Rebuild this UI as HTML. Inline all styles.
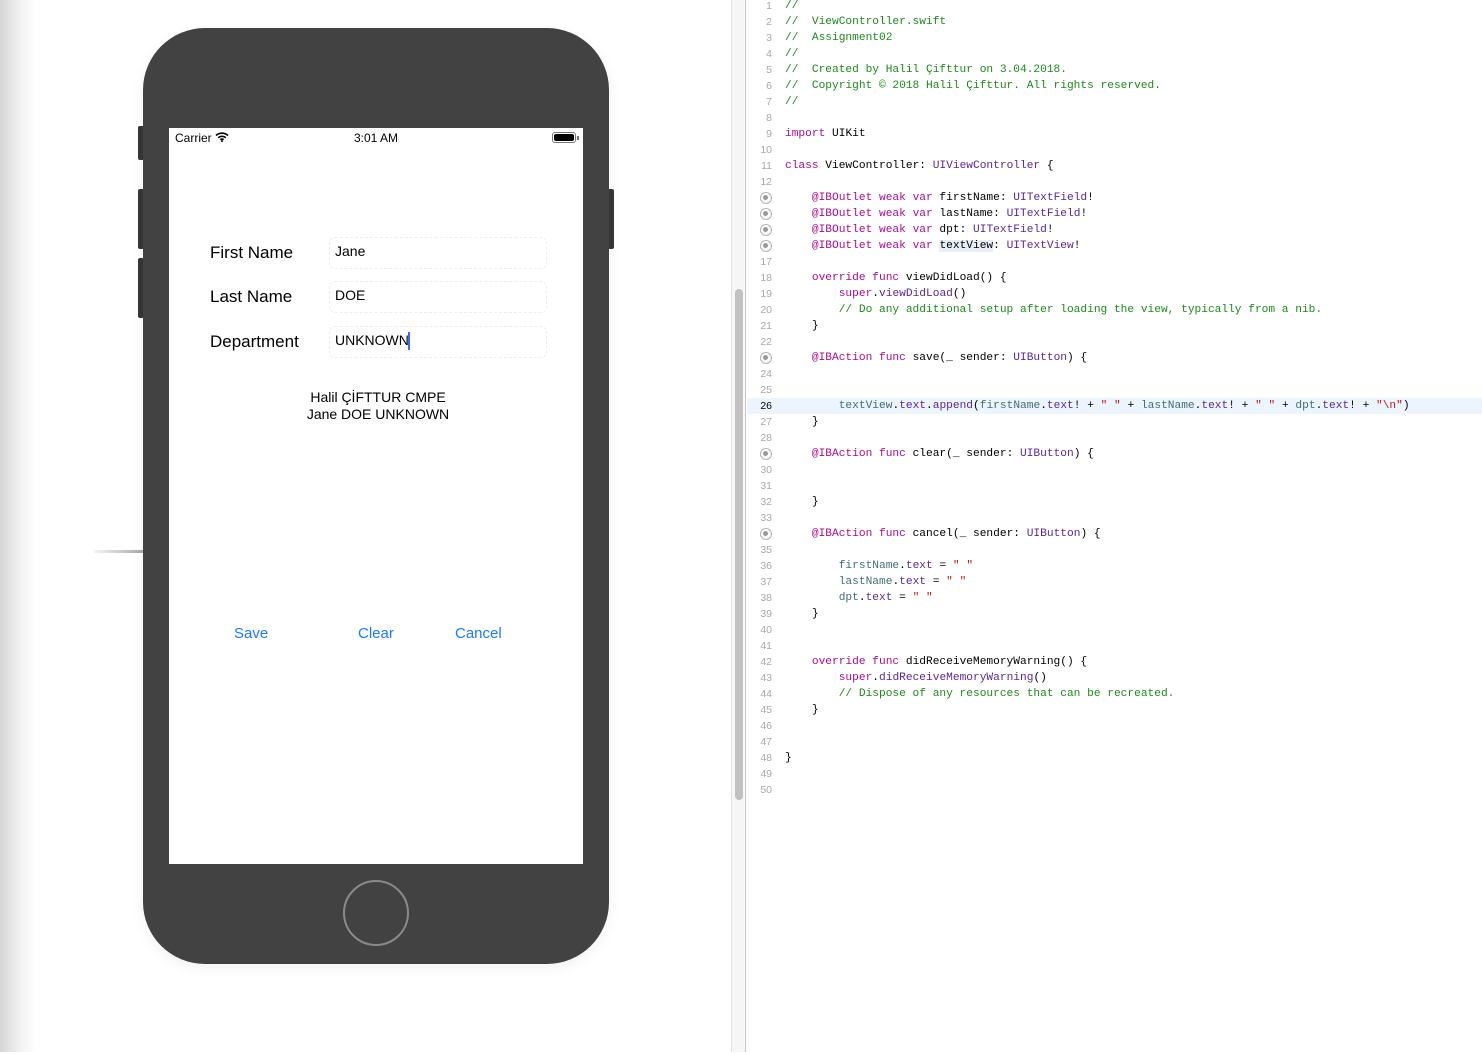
<!DOCTYPE html>
<html><head><meta charset="utf-8"><style>
*{margin:0;padding:0;box-sizing:border-box}
body{width:1482px;height:1052px;position:relative;overflow:hidden;background:#fff;font-family:"Liberation Sans",sans-serif}
.abs{position:absolute}
.grad{left:0;top:0;width:36px;height:1052px;background:linear-gradient(90deg,#d6d6d6,#f3f3f3 60%,#fff)}
.phone{left:143px;top:28px;width:466px;height:936px;background:#424242;border-radius:62px;box-shadow:0 4px 14px rgba(0,0,0,0.06)}
.btn{background:#363636;width:6px;border-radius:2px}
.screen{left:169px;top:128px;width:414px;height:736px;background:#fff}
.home{left:343px;top:880px;width:66px;height:66px;border:2.5px solid #8a8a8a;border-radius:50%}
.lbl{font-size:17px;color:#000}
.fld{font-size:14px;color:#000}
.box{position:absolute;left:160px;width:218px;height:32px;border:1px dashed #eee;border-radius:6px}
.blue{color:#1a7cf6;font-size:15px}
.strip{left:731px;top:0;width:15px;height:1052px;background:#f6f6f6;border-left:1px solid #e2e2e2;border-right:1px solid #c9c9c9}
.scroll{left:735px;top:289px;width:8px;height:511px;background:#c1c1c1;border-radius:4px}
.code{left:747px;top:2px;width:735px;height:1052px;font-family:"Liberation Mono",monospace;font-size:11.2px;color:#000}
.ln{position:absolute;left:0;width:735px;height:16px;line-height:16px;white-space:pre}
.num{position:absolute;left:0;width:25px;text-align:right;color:#a8a8a8;font-size:10.5px;font-family:"Liberation Sans",sans-serif}
.txt{position:absolute;left:38px}
.dot{position:absolute;left:13px;top:2px;width:12px;height:12px;border-radius:50%;border:1.5px solid #b0b0b0;background:#fff}
.dot:after{content:"";position:absolute;left:2px;top:2px;width:5px;height:5px;border-radius:50%;background:#999}
.c{color:#1c8a1c}.k{color:#aa0d91}.t{color:#5c2699}.p{color:#3f6e74}.s{color:#c41a16}
.hl{background:#ecf4fe}
</style></head><body>
<div class="abs grad"></div>
<div class="abs" style="left:94px;top:550px;width:50px;height:3px;background:linear-gradient(90deg,#f4f4f4,#a8a8a8)"></div>
<div class="abs btn" style="left:138px;top:126px;height:34px"></div>
<div class="abs btn" style="left:138px;top:189px;height:60px"></div>
<div class="abs btn" style="left:138px;top:258px;height:60px"></div>
<div class="abs btn" style="left:608px;top:189px;height:60px"></div>
<div class="abs phone"></div>
<div class="abs home"></div>
<div class="abs screen">
 <div class="abs" style="left:6px;top:3px;font-size:12px">Carrier <svg width="14" height="10" viewBox="0 0 14 10" style="vertical-align:0"><path d="M1 3.5a9 9 0 0 1 12 0M3.2 5.7a6 6 0 0 1 7.6 0M5.3 7.7a3 3 0 0 1 3.4 0" stroke="#000" stroke-width="1.6" fill="none"/><circle cx="7" cy="9" r="1" fill="#000"/></svg></div>
 <div class="abs" style="left:185px;top:3px;font-size:12px">3:01 AM</div>
 <div class="abs" style="left:383px;top:4px;width:24px;height:11px;border:1px solid #777;border-radius:3px;padding:1px"><div style="width:100%;height:100%;background:#000;border-radius:2px"></div></div>
 <div class="abs" style="left:408px;top:8px;width:1.5px;height:4px;background:#777"></div>
 <div class="box" style="top:109px"></div>
 <div class="box" style="top:153px"></div>
 <div class="box" style="top:198px"></div>
 <div class="abs lbl" style="left:41px;top:115px">First Name</div>
 <div class="abs lbl" style="left:41px;top:159px">Last Name</div>
 <div class="abs lbl" style="left:41px;top:204px">Department</div>
 <div class="abs fld" style="left:166px;top:115px">Jane</div>
 <div class="abs fld" style="left:166px;top:159px">DOE</div>
 <div class="abs fld" style="left:166px;top:204px">UNKNOWN</div>
 <div class="abs" style="left:239px;top:204px;width:2px;height:18px;background:#3c6cf0"></div>
 <div class="abs" style="left:0;top:261px;width:418px;text-align:center;font-size:14px;line-height:17px">Halil ÇİFTTUR CMPE<br>Jane DOE UNKNOWN</div>
 <div class="abs blue" style="left:65px;top:497px">Save</div>
 <div class="abs blue" style="left:189px;top:497px">Clear</div>
 <div class="abs blue" style="left:286px;top:497px">Cancel</div>
</div>
<div class="abs strip"></div>
<div class="abs scroll"></div>
<div class="abs code">
<div class="ln" style="top:-4px"><span class="num">1</span><span class="txt c">//</span></div>
<div class="ln" style="top:12px"><span class="num">2</span><span class="txt c">//  ViewController.swift</span></div>
<div class="ln" style="top:28px"><span class="num">3</span><span class="txt c">//  Assignment02</span></div>
<div class="ln" style="top:44px"><span class="num">4</span><span class="txt c">//</span></div>
<div class="ln" style="top:60px"><span class="num">5</span><span class="txt c">//  Created by Halil Çifttur on 3.04.2018.</span></div>
<div class="ln" style="top:76px"><span class="num">6</span><span class="txt c">//  Copyright © 2018 Halil Çifttur. All rights reserved.</span></div>
<div class="ln" style="top:92px"><span class="num">7</span><span class="txt c">//</span></div>
<div class="ln" style="top:108px"><span class="num">8</span></div>
<div class="ln" style="top:124px"><span class="num">9</span><span class="txt"><span class="k">import</span> UIKit</span></div>
<div class="ln" style="top:140px"><span class="num">10</span></div>
<div class="ln" style="top:156px"><span class="num">11</span><span class="txt"><span class="k">class</span> ViewController: <span class="t">UIViewController</span> {</span></div>
<div class="ln" style="top:172px"><span class="num">12</span></div>
<div class="ln" style="top:188px"><span class="dot"></span><span class="txt">    <span class="k">@IBOutlet weak var</span> firstName: <span class="t">UITextField</span>!</span></div>
<div class="ln" style="top:204px"><span class="dot"></span><span class="txt">    <span class="k">@IBOutlet weak var</span> lastName: <span class="t">UITextField</span>!</span></div>
<div class="ln" style="top:220px"><span class="dot"></span><span class="txt">    <span class="k">@IBOutlet weak var</span> dpt: <span class="t">UITextField</span>!</span></div>
<div class="ln" style="top:236px"><span class="dot"></span><span class="txt">    <span class="k">@IBOutlet weak var</span> <span style="background:#e8eef6">textView</span>: <span class="t">UITextView</span>!</span></div>
<div class="ln" style="top:252px"><span class="num">17</span></div>
<div class="ln" style="top:268px"><span class="num">18</span><span class="txt">    <span class="k">override func</span> viewDidLoad() {</span></div>
<div class="ln" style="top:284px"><span class="num">19</span><span class="txt">        <span class="k">super</span>.<span class="t">viewDidLoad</span>()</span></div>
<div class="ln" style="top:300px"><span class="num">20</span><span class="txt c">        // Do any additional setup after loading the view, typically from a nib.</span></div>
<div class="ln" style="top:316px"><span class="num">21</span><span class="txt">    }</span></div>
<div class="ln" style="top:332px"><span class="num">22</span></div>
<div class="ln" style="top:348px"><span class="dot"></span><span class="txt">    <span class="k">@IBAction func</span> save(_ sender: <span class="t">UIButton</span>) {</span></div>
<div class="ln" style="top:364px"><span class="num">24</span></div>
<div class="ln" style="top:380px"><span class="num">25</span></div>
<div class="ln hl" style="top:396px"><span class="num" style="color:#000">26</span><span class="txt">        <span class="p">textView</span>.<span class="t">text</span>.<span class="t">append</span>(<span class="p">firstName</span>.<span class="t">text</span>! + <span class="s">" "</span> + <span class="p">lastName</span>.<span class="t">text</span>! + <span class="s">" "</span> + <span class="p">dpt</span>.<span class="t">text</span>! + <span class="s">"\n"</span>)</span></div>
<div class="ln" style="top:412px"><span class="num">27</span><span class="txt">    }</span></div>
<div class="ln" style="top:428px"><span class="num">28</span></div>
<div class="ln" style="top:444px"><span class="dot"></span><span class="txt">    <span class="k">@IBAction func</span> clear(_ sender: <span class="t">UIButton</span>) {</span></div>
<div class="ln" style="top:460px"><span class="num">30</span></div>
<div class="ln" style="top:476px"><span class="num">31</span></div>
<div class="ln" style="top:492px"><span class="num">32</span><span class="txt">    }</span></div>
<div class="ln" style="top:508px"><span class="num">33</span></div>
<div class="ln" style="top:524px"><span class="dot"></span><span class="txt">    <span class="k">@IBAction func</span> cancel(_ sender: <span class="t">UIButton</span>) {</span></div>
<div class="ln" style="top:540px"><span class="num">35</span></div>
<div class="ln" style="top:556px"><span class="num">36</span><span class="txt">        <span class="p">firstName</span>.<span class="t">text</span> = <span class="s">" "</span></span></div>
<div class="ln" style="top:572px"><span class="num">37</span><span class="txt">        <span class="p">lastName</span>.<span class="t">text</span> = <span class="s">" "</span></span></div>
<div class="ln" style="top:588px"><span class="num">38</span><span class="txt">        <span class="p">dpt</span>.<span class="t">text</span> = <span class="s">" "</span></span></div>
<div class="ln" style="top:604px"><span class="num">39</span><span class="txt">    }</span></div>
<div class="ln" style="top:620px"><span class="num">40</span></div>
<div class="ln" style="top:636px"><span class="num">41</span></div>
<div class="ln" style="top:652px"><span class="num">42</span><span class="txt">    <span class="k">override func</span> didReceiveMemoryWarning() {</span></div>
<div class="ln" style="top:668px"><span class="num">43</span><span class="txt">        <span class="k">super</span>.<span class="t">didReceiveMemoryWarning</span>()</span></div>
<div class="ln" style="top:684px"><span class="num">44</span><span class="txt c">        // Dispose of any resources that can be recreated.</span></div>
<div class="ln" style="top:700px"><span class="num">45</span><span class="txt">    }</span></div>
<div class="ln" style="top:716px"><span class="num">46</span></div>
<div class="ln" style="top:732px"><span class="num">47</span></div>
<div class="ln" style="top:748px"><span class="num">48</span><span class="txt">}</span></div>
<div class="ln" style="top:764px"><span class="num">49</span></div>
<div class="ln" style="top:780px"><span class="num">50</span></div>
</div>
</body></html>
